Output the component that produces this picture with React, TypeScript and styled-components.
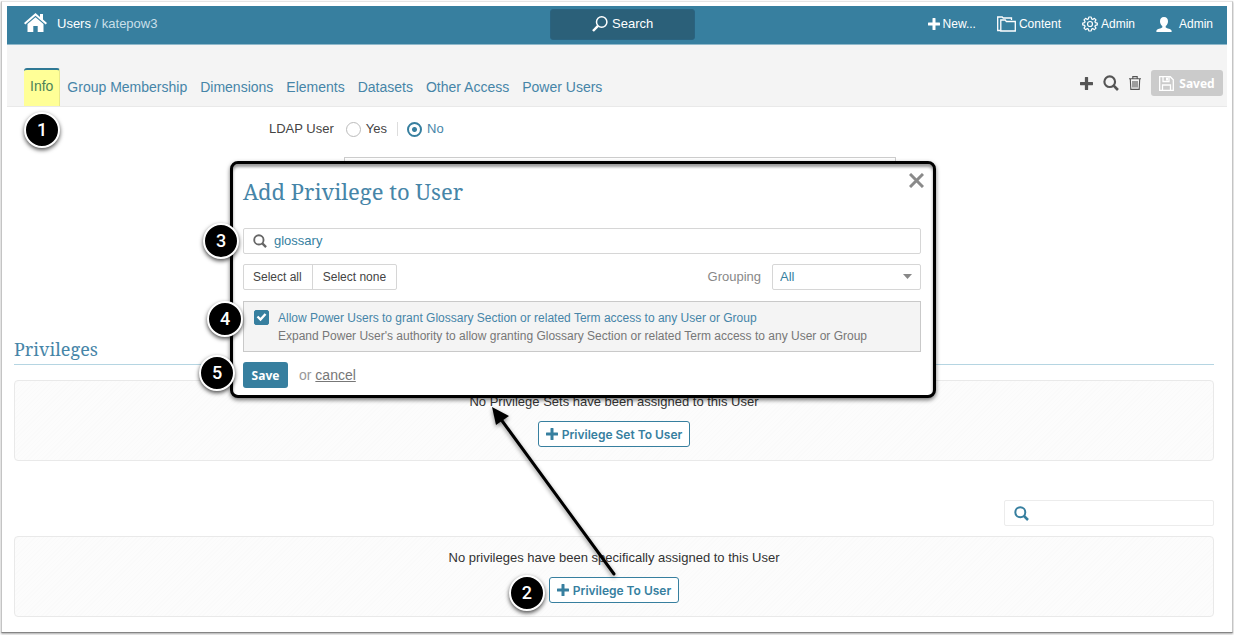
import React, { useState } from "react";
import styled, { createGlobalStyle, css } from "styled-components";

const blue = "#377f9f";
const linkBlue = "#4685a8";

const GlobalStyle = createGlobalStyle`
  * { box-sizing: border-box; }
  body {
    margin: 0;
    background: #fff;
    color: #444;
    font-family: "Liberation Sans", Arial, sans-serif;
    font-size: 13px;
    line-height: 18px;
  }
  button, input, select, textarea { font: inherit; color: inherit; margin: 0; }
`;

const Page = styled.div`
  padding: 1px 1px 2px;
`;

const Frame = styled.div`
  position: relative;
  padding: 4px 5px 15px;
  border: 1px solid #c4c4c4;
  border-top-color: #e4e4e4;
  border-bottom-color: #858585;
  box-shadow: 0 1px 2px rgba(0, 0, 0, 0.35);
`;

const TopBar = styled.header`
  display: grid;
  grid-template-columns: 64fr 145px 63fr;
  align-items: center;
  height: 39px;
  padding: 0 14px 2px 17px;
  background: ${blue};
  border-bottom: 1px solid #8fb8ca;
  color: #fff;
`;

const Crumbs = styled.nav`
  display: flex;
  align-items: center;
  color: #c9dfe9;
  white-space: pre;
`;

const CrumbLink = styled.a`
  display: flex;
  color: #fff;
  text-decoration: none;
`;

const HomeLink = styled(CrumbLink)`
  margin: 0 10px 3px 0;
`;

const SearchButton = styled.button`
  display: flex;
  align-items: center;
  justify-content: center;
  gap: 4px;
  height: 31px;
  padding: 0;
  border: 1px solid #2a6380;
  border-radius: 3px;
  background: #2b6079;
  color: #fff;
`;

const TopLinks = styled.nav`
  display: flex;
  justify-content: flex-end;
  align-items: center;
  gap: 21px;
`;

const TopLink = styled.a<{ $gap?: number }>`
  display: flex;
  align-items: center;
  gap: ${(p) => p.$gap ?? 3}px;
  color: #fff;
  font-size: 12px;
  text-decoration: none;
`;

const TabBar = styled.div`
  display: flex;
  justify-content: space-between;
  height: 62px;
  padding: 23px 4px 0 17px;
  background: #f4f4f4;
  border-bottom: 1px solid #e9e9e9;
`;

const Tabs = styled.nav`
  display: flex;
  gap: 13px;
`;

const Tab = styled.a<{ $active?: boolean }>`
  position: relative;
  padding-top: 10px;
  color: ${linkBlue};
  font-size: 14px;
  text-decoration: none;
  ${(p) =>
    p.$active &&
    css`
      margin-right: -6px;
      padding: 7px 6px 0;
      border-top: 2px solid #2f7894;
      border-right: 1px solid #e9e98c;
      border-radius: 3px 3px 0 0;
      background: #ffff97;
      color: #4c8259;
    `}
`;

const Tools = styled.div`
  display: flex;
  align-items: center;
  align-self: flex-start;
  gap: 10px;
  margin-top: 2px;
`;

const ToolButton = styled.button`
  display: flex;
  padding: 0;
  border: 0;
  background: none;
  color: #555;
`;

const SavedButton = styled.button`
  display: flex;
  align-items: center;
  justify-content: center;
  gap: 5px;
  width: 72px;
  height: 26px;
  padding: 0;
  border: 0;
  border-radius: 3px;
  background: #cbcbcb;
  color: #fff;
  font: bold 12px "Noto Sans", sans-serif;
`;

const Content = styled.main`
  padding: 0 13px 0 7px;
`;

const RadioRow = styled.fieldset`
  display: flex;
  align-items: center;
  height: 18px;
  margin: 13px 0 19px 255px;
  padding: 0;
  border: 0;
`;

const Legend = styled.span`
  margin-right: 12px;
`;

const Choice = styled.label<{ $on: boolean }>`
  display: flex;
  align-items: center;
  gap: 5px;
  color: ${(p) => (p.$on ? linkBlue : "#444")};
`;

const Radio = styled.input`
  appearance: none;
  width: 15px;
  height: 15px;
  border: 1px solid #bbb;
  border-radius: 50%;
  background: #fff;
  &:checked {
    border: 2px solid ${blue};
    background: radial-gradient(circle, ${blue} 2px, #fff 3px);
  }
`;

const Divider = styled.span`
  width: 1px;
  height: 14px;
  margin: 0 9px 0 10px;
  background: #ddd;
`;

const Notes = styled.textarea`
  display: block;
  width: 46%;
  height: 120px;
  margin-left: 330px;
  border: 1px solid #ccc;
  resize: none;
`;

const SectionTitle = styled.h2`
  margin: 59px 0 15px;
  padding-bottom: 1px;
  border-bottom: 1px solid #b5d5e2;
  color: ${linkBlue};
  font: 18px/27px "Noto Serif", "Droid Serif", "DejaVu Serif Condensed", "DejaVu Serif", serif;
`;

const EmptyPanel = styled.section`
  display: flex;
  flex-direction: column;
  align-items: center;
  gap: 10px;
  height: 81px;
  padding-top: 12px;
  border: 1px solid #e9e9e9;
  border-radius: 4px;
  background: repeating-linear-gradient(135deg, #fcfcfc 0 2px, #fafafa 2px 3px);
  color: #333;
`;

const AddWrap = styled.div`
  position: relative;
`;

const AddButton = styled.button`
  display: flex;
  align-items: center;
  gap: 4px;
  height: 26px;
  padding: 0 7px;
  border: 1px solid ${blue};
  border-radius: 3px;
  background: #fff;
  color: ${blue};
  font: 600 12px Inter, sans-serif;
`;

const FilterRow = styled.div`
  display: flex;
  justify-content: flex-end;
  margin: 39px 0 10px;
`;

const SearchField = styled.label<{ $light?: boolean }>`
  display: flex;
  align-items: center;
  gap: 7px;
  height: 26px;
  padding: 0 9px;
  border: 1px solid ${(p) => (p.$light ? "#ececec" : "#d6d6d6")};
  border-radius: 2px;
  background: #fff;
  color: ${(p) => (p.$light ? blue : "#666")};
  ${(p) =>
    p.$light &&
    css`
      width: 210px;
    `}
`;

const SearchInput = styled.input`
  flex: 1;
  min-width: 0;
  padding: 0;
  border: 0;
  outline: 0;
  background: none;
  color: ${blue};
`;

const Dialog = styled.section`
  position: absolute;
  z-index: 2;
  top: 159px;
  left: 228px;
  right: 296px;
  padding: 11px 12px 7px 10px;
  border: 3px solid #000;
  border-radius: 8px;
  background: #fff;
  box-shadow: 0 2px 4px rgba(0, 0, 0, 0.55), inset 0 3px 3px rgba(0, 0, 0, 0.4);
`;

const DialogTitle = styled.h1`
  margin: 0 0 21px;
  color: ${linkBlue};
  font: 22px/32px "Noto Serif", "Droid Serif", "DejaVu Serif Condensed", "DejaVu Serif", serif;
`;

const CloseButton = styled.button`
  position: absolute;
  top: 9px;
  right: 9px;
  display: flex;
  padding: 0;
  border: 0;
  background: none;
  color: #8a8a8a;
`;

const Line = styled.div`
  position: relative;
`;

const Controls = styled.div`
  display: flex;
  align-items: center;
  justify-content: space-between;
  margin: 10px 0 11px;
`;

const ButtonPair = styled.div`
  display: flex;
  height: 26px;
  border: 1px solid #d6d6d6;
  border-radius: 2px;
`;

const PairButton = styled.button`
  padding: 0 10px 0 9px;
  border: 0;
  background: none;
  font-size: 12px;
  & + & { border-left: 1px solid #d6d6d6; padding-left: 10px; }
`;

const Grouping = styled.label`
  display: flex;
  align-items: center;
  gap: 11px;
  color: #888;
`;

const SelectWrap = styled.span`
  position: relative;
  display: flex;
`;

const Select = styled.select`
  appearance: none;
  width: 149px;
  height: 26px;
  padding: 0 7px;
  border: 1px solid #d6d6d6;
  border-radius: 2px;
  background: #fff;
  color: ${blue};
`;

const Caret = styled.svg`
  position: absolute;
  top: 10px;
  right: 9px;
  pointer-events: none;
`;

const Option = styled.label`
  display: flex;
  gap: 9px;
  height: 51px;
  padding: 7px 10px;
  border: 1px solid #c9c9c9;
  background: #f4f4f4;
  font-size: 12px;
`;

const CheckBox = styled.span`
  position: relative;
  display: flex;
  width: 15px;
  height: 15px;
  margin-top: 1px;
  svg { position: absolute; inset: 0; pointer-events: none; }
`;

const Check = styled.input`
  appearance: none;
  width: 15px;
  height: 15px;
  border: 1px solid ${blue};
  border-radius: 2px;
  background: #fff;
  &:checked { background: ${blue}; }
`;

const OptionText = styled.span`
  display: flex;
  flex-direction: column;
  color: #777;
  strong { color: ${linkBlue}; font-weight: normal; }
`;

const Actions = styled.div`
  position: relative;
  display: flex;
  align-items: center;
  margin-top: 10px;
  color: #999;
  font-size: 14px;
  white-space: pre;
`;

const SaveButton = styled.button`
  width: 45px;
  height: 26px;
  margin-right: 11px;
  padding: 0;
  border: 0;
  border-radius: 3px;
  background: ${blue};
  color: #fff;
  font: bold 12px "Noto Sans", sans-serif;
`;

const CancelLink = styled.a`
  color: #777;
`;

const Badge = styled.span<{ $x: number; $y: number }>`
  position: absolute;
  z-index: 3;
  left: ${(p) => p.$x}px;
  top: ${(p) => p.$y}px;
  display: flex;
  align-items: center;
  justify-content: center;
  width: 36px;
  height: 36px;
  border: 2px solid #fff;
  border-radius: 50%;
  background: #000;
  box-shadow: 0 2px 4px rgba(0, 0, 0, 0.7);
  color: #fff;
  font: 500 18px/18px Roboto, sans-serif;
`;

const Arrow = styled.svg`
  position: absolute;
  z-index: 4;
  left: calc(50% - 130px);
  bottom: 23px;
  pointer-events: none;
  filter: drop-shadow(0 2px 2px rgba(0, 0, 0, 0.45));
`;

const Plus = ({ size = 12 }: { size?: number }) => (
  <svg width={size} height={size} viewBox="0 0 12 12" fill="currentColor" aria-hidden="true">
    <path d="M5 0h2q.5 0 .5.5v4h4q.5 0 .5.5v2q0 .5-.5.5h-4v4q0 .5-.5.5H5q-.5 0-.5-.5v-4h-4Q0 7.500 0 7V5q0-.5.5-.5h4v-4Q4.500 0 5 0z" />
  </svg>
);

const Magnifier = ({ size = 15, stroke = 2 }: { size?: number; stroke?: number }) => (
  <svg width={size} height={size} viewBox="0 0 15 15" fill="none" stroke="currentColor" strokeWidth={stroke} aria-hidden="true">
    <circle cx="6.300" cy="6.300" r="5" />
    <path d="M10 10l4 4" strokeWidth={stroke + 0.5} />
  </svg>
);

export default function App() {
  const [ldap, setLdap] = useState("No");
  const [query, setQuery] = useState("glossary");
  const [granted, setGranted] = useState(true);

  return (
    <Page>
      <GlobalStyle />
      <Frame>
        <TopBar>
          <Crumbs>
            <HomeLink href="#home" aria-label="Home">
              <svg width="23" height="19" viewBox="0 0 23 19" fill="currentColor">
                <path d="M11.500 0L0 10l1.300 1.400L11.500 2.700l10.200 8.700L23 10l-4-3.500V1h-3v3z" />
                <path d="M11.500 4.300L3.500 11v8H9.300v-6h4.400v6h5.800v-8z" />
              </svg>
            </HomeLink>
            <CrumbLink href="#users">Users</CrumbLink> / katepow3
          </Crumbs>
          <SearchButton type="button">
            <svg width="16" height="16" viewBox="0 0 16 16" fill="none" stroke="currentColor" aria-hidden="true">
              <circle cx="9.700" cy="6" r="5.200" strokeWidth="1.500" />
              <path d="M6 9.800L1 15" strokeWidth="2.500" />
            </svg>
            Search
          </SearchButton>
          <TopLinks>
            <TopLink href="#new"><Plus />New...</TopLink>
            <TopLink href="#content">
              <svg width="19" height="16" viewBox="0 0 19 16" fill="none" stroke="currentColor" strokeWidth="1.300" aria-hidden="true">
                <path d="M3.500 14.500H.7V1h4.500l1 1h8.300v2" />
                <path d="M3.800 15V4h4.500l1 1.500h9V15z" />
              </svg>
              Content
            </TopLink>
            <TopLink href="#admin">
              <svg width="16" height="16" viewBox="0 0 16 16" fill="none" stroke="currentColor" strokeWidth="1.200" strokeLinejoin="round" aria-hidden="true">
                <path d="M6.800 1h2.400l.4 1.900 1.100.5 1.700-1.100 1.600 1.600-1.100 1.700.5 1.100 1.900.4v1.800l-1.900.4-.5 1.100 1.100 1.700-1.600 1.600-1.700-1.100-1.100.5L9.200 15H6.800l-.4-1.900-1.100-.5-1.700 1.100L2 12.100l1.100-1.700-.5-1.100L.7 8.900V7.100l1.900-.4.5-1.100L2 3.900l1.600-1.600 1.700 1.100 1.100-.5z" />
                <circle cx="8" cy="8" r="2.500" />
              </svg>
              Admin
            </TopLink>
            <TopLink href="#account" $gap={7}>
              <svg width="16" height="15" viewBox="0 0 16 15" fill="currentColor" aria-hidden="true">
                <path d="M8 0C5.300 0 4 1.700 4 4.200c0 2 .9 3.900 2.300 4.800v1.500C5 11.600 1 11.500.4 13.800V15h15.200v-1.200C15 11.500 11 11.600 9.700 10.500V9C11.100 8.100 12 6.200 12 4.200 12 1.700 10.700 0 8 0z" />
              </svg>
              Admin
            </TopLink>
          </TopLinks>
        </TopBar>

        <TabBar>
          <Tabs>
            <Tab href="#info" $active>
              Info
              <Badge $x={0} $y={42}>1</Badge>
            </Tab>
            {["Group Membership", "Dimensions", "Elements", "Datasets", "Other Access", "Power Users"].map((name) => (
              <Tab key={name} href="#tab">{name}</Tab>
            ))}
          </Tabs>
          <Tools>
            <ToolButton type="button" aria-label="Add"><Plus size={13} /></ToolButton>
            <ToolButton type="button" aria-label="Find"><Magnifier size={16} /></ToolButton>
            <ToolButton type="button" aria-label="Delete">
              <svg width="12" height="14" viewBox="0 0 12 14" fill="none" stroke="currentColor" strokeWidth="1.100">
                <path d="M0 2.800h12M3.800 2.500V.6h4.400v1.900M1.300 3l.5 10.400h8.400L10.700 3M4 5v6.500M6 5v6.500M8 5v6.500" />
              </svg>
            </ToolButton>
            <SavedButton type="button">
              <svg width="15" height="15" viewBox="0 0 15 15" fill="none" stroke="currentColor" strokeWidth="1.300" aria-hidden="true">
                <path d="M.7.700h10.600l3 3v10.600H.7z" />
                <path d="M3.500 14V9h8v5M4 1v4.500h6V1" />
                <path d="M8 1.500v3" strokeWidth="2" />
              </svg>
              Saved
            </SavedButton>
          </Tools>
        </TabBar>

        <Content>
          <RadioRow aria-labelledby="ldap">
            <Legend id="ldap">LDAP User</Legend>
            <Choice $on={ldap === "Yes"}>
              <Radio type="radio" name="ldap" checked={ldap === "Yes"} onChange={() => setLdap("Yes")} />
              Yes
            </Choice>
            <Divider />
            <Choice $on={ldap === "No"}>
              <Radio type="radio" name="ldap" checked={ldap === "No"} onChange={() => setLdap("No")} />
              No
            </Choice>
          </RadioRow>
          <Notes aria-label="Notes" />

          <SectionTitle>Privileges</SectionTitle>
          <EmptyPanel>
            No Privilege Sets have been assigned to this User
            <AddButton type="button"><Plus />Privilege Set To User</AddButton>
          </EmptyPanel>

          <FilterRow>
            <SearchField $light>
              <Magnifier />
              <SearchInput type="text" aria-label="Search privileges" />
            </SearchField>
          </FilterRow>
          <EmptyPanel>
            No privileges have been specifically assigned to this User
            <AddWrap>
              <AddButton type="button"><Plus />Privilege To User</AddButton>
              <Badge $x={-40} $y={-2}>2</Badge>
              <Arrow width="140" height="180" viewBox="0 0 140 180" aria-hidden="true">
                <path d="M130 174L16 18" stroke="#000" strokeWidth="3" strokeLinecap="round" />
                <path d="M8 7l17 9-13 9z" fill="#000" />
              </Arrow>
            </AddWrap>
          </EmptyPanel>
        </Content>

        <Dialog role="dialog" aria-labelledby="dialog-title">
          <CloseButton type="button" aria-label="Close">
            <svg width="15" height="15" viewBox="0 0 15 15" stroke="currentColor" strokeWidth="3">
              <path d="M1 1l13 13M14 1L1 14" />
            </svg>
          </CloseButton>
          <DialogTitle id="dialog-title">Add Privilege to User</DialogTitle>
          <Line>
            <SearchField>
              <Magnifier size={14} />
              <SearchInput type="text" aria-label="Filter" value={query} onChange={(e) => setQuery(e.target.value)} />
            </SearchField>
            <Badge $x={-40} $y={-5}>3</Badge>
          </Line>
          <Controls>
            <ButtonPair>
              <PairButton type="button">Select all</PairButton>
              <PairButton type="button">Select none</PairButton>
            </ButtonPair>
            <Grouping>
              Grouping
              <SelectWrap>
                <Select defaultValue="All">
                  <option>All</option>
                </Select>
                <Caret width="9" height="5" viewBox="0 0 9 5" aria-hidden="true">
                  <path d="M0 0h9L4.500 5z" fill="#888" />
                </Caret>
              </SelectWrap>
            </Grouping>
          </Controls>
          <Line>
            <Option>
              <CheckBox>
                <Check type="checkbox" checked={granted} onChange={(e) => setGranted(e.target.checked)} />
                <svg width="15" height="15" viewBox="0 0 15 15" fill="none" stroke="#fff" strokeWidth="2.400" aria-hidden="true">
                  <path d="M3.500 6.500l3 3 5-5.500" />
                </svg>
              </CheckBox>
              <OptionText>
                <strong>Allow Power Users to grant Glossary Section or related Term access to any User or Group</strong>
                <span>Expand Power User's authority to allow granting Glossary Section or related Term access to any User or Group</span>
              </OptionText>
            </Option>
            <Badge $x={-36} $y={0}>4</Badge>
          </Line>
          <Actions>
            <SaveButton type="button">Save</SaveButton>
            or <CancelLink href="#cancel">cancel</CancelLink>
            <Badge $x={-44} $y={-7}>5</Badge>
          </Actions>
        </Dialog>
      </Frame>
    </Page>
  );
}
